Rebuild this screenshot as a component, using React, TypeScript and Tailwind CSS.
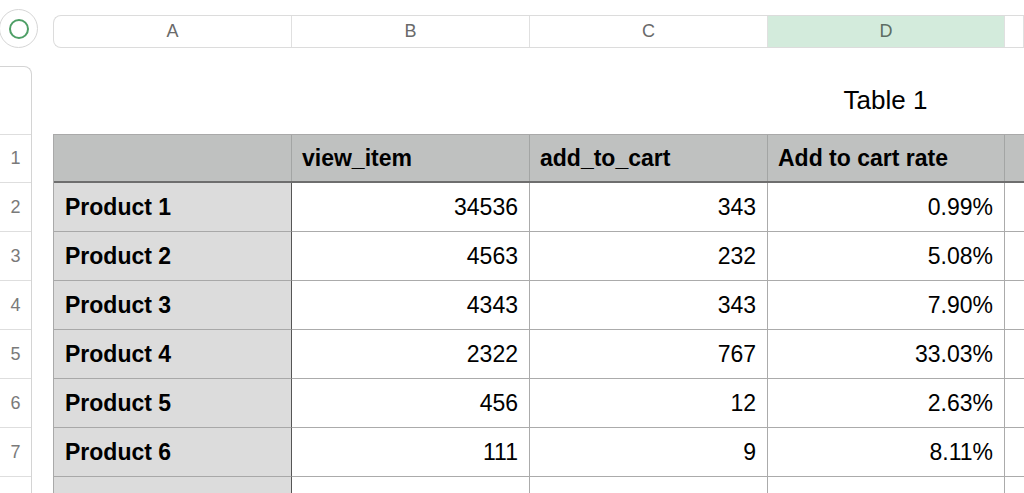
import React from 'react'

const rows = [
  ['Product 1', '34536', '343', '0.99%'],
  ['Product 2', '4563', '232', '5.08%'],
  ['Product 3', '4343', '343', '7.90%'],
  ['Product 4', '2322', '767', '33.03%'],
  ['Product 5', '456', '12', '2.63%'],
  ['Product 6', '111', '9', '8.11%'],
  ['', '', '', ''],
]

const cols = 'grid-cols-[238px_238px_238px_237px_1fr]'

export default function App() {
  return (
    <div className="w-[1024px] h-[493px] overflow-hidden bg-white flex font-['Liberation_Sans',Arial,sans-serif] text-black">
      {/* left rail: select-all circle + row numbers */}
      <div className="w-[53px] shrink-0 flex flex-col overflow-hidden">
        <div className="h-[66px] shrink-0 pt-[9px]">
          <div className="w-[39px] h-[39px] -ml-[1px] rounded-full border border-[#d6d6d6] flex items-center justify-center">
            <div className="w-[20px] h-[20px] rounded-full border-2 border-[#4e9f66]" />
          </div>
        </div>
        <div className="w-[32px] shrink-0 border-t border-r border-[#d4d4d4] rounded-tr-[8px]">
          <div className="h-[67px]" />
          {['1', '2', '3', '4', '5', '6', '7', '8'].map((n, i) => (
            <div
              key={n}
              className={`${i === 0 ? 'h-[48px]' : 'h-[49px]'} border-t border-[#dedede] flex items-center justify-center text-[18px] text-[#7a7a7a]`}
            >
              {n}
            </div>
          ))}
        </div>
      </div>

      {/* sheet area */}
      <div className="flex-1 flex flex-col min-w-0">
        <div className={`mt-[15px] h-[33px] shrink-0 grid ${cols} border-y border-l border-[#dcdcdc] rounded-l-[8px] overflow-hidden text-[18px] text-[#6a6a6a]`}>
          {['A', 'B', 'C', 'D', ''].map((c, i) => (
            <div
              key={i}
              className={`flex items-center justify-center border-r border-[#e0e0e0] ${c === 'D' ? 'bg-[#d3ebdc] text-[#5d6d63]' : ''}`}
            >
              {c}
            </div>
          ))}
        </div>

        <div className={`h-[86px] shrink-0 grid ${cols}`}>
          <div className="col-start-4 flex items-start justify-center pt-[38px] text-[26px] leading-[28px]">
            Table 1
          </div>
        </div>

        <div className="border-l border-t border-[#a9a9a9]">
          <div className={`grid ${cols} h-[48px] bg-[#bfc1c0] border-b-2 border-[#6e6e6e] text-[23px] font-bold`}>
            <div className="border-r border-[#a3a5a4]" />
            <div className="border-r border-[#a3a5a4] flex items-center pl-[10px]">view_item</div>
            <div className="border-r border-[#a3a5a4] flex items-center pl-[10px]">add_to_cart</div>
            <div className="border-r border-[#a3a5a4] flex items-center pl-[10px]">Add to cart rate</div>
            <div />
          </div>
          {rows.map((r, i) => (
            <div key={i} className={`grid ${cols} h-[49px] text-[23px]`}>
              <div className="bg-[#dcdcdc] border-r border-b border-r-[#555555] border-b-[#a8a8a8] flex items-center pl-[11px] font-bold">
                {r[0]}
              </div>
              {r.slice(1).map((v, j) => (
                <div key={j} className="border-r border-b border-[#ababab] flex items-center justify-end pr-[11px]">
                  {v}
                </div>
              ))}
              <div className="border-b border-[#ababab]" />
            </div>
          ))}
        </div>
      </div>
    </div>
  )
}
